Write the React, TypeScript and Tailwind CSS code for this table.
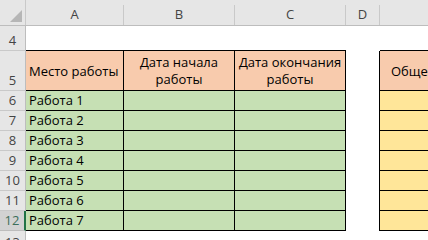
import React from "react";

const FONT = { fontFamily: '"Open Sans", "Noto Sans", sans-serif' };

const rows = [6, 7, 8, 9, 10, 11, 12];

function RowHead({ n, active = false, h }: { n: number; active?: boolean; h: string }) {
  return (
    <div
      className={`${h} w-[26px] shrink-0 flex items-end justify-center border-b text-[13px] leading-[17px] ${
        active
          ? "bg-[#d2d2d2] text-[#3b6e5a] border-r-2 border-r-[#217346] border-b-[#bdbdbd]"
          : "bg-[#e6e6e6] text-[#444] border-r border-r-[#bdbdbd] border-b-[#c9c9c9]"
      }`}
    >
      <span className="pb-[1px]">{n}</span>
    </div>
  );
}

export default function App() {
  return (
    <div className="w-[428px] h-[240px] overflow-hidden bg-white text-black" style={FONT}>
      {/* column letters */}
      <div className="flex items-end h-[26px] bg-[#e6e6e6] border-b border-[#bdbdbd] text-[13px] text-[#444]">
        <div className="w-[26px] h-full shrink-0 border-r border-[#c9c9c9] flex items-end justify-end pr-[3px] pb-[3px]">
          <svg width="12" height="12" viewBox="0 0 12 12">
            <polygon points="12,0 12,12 0,12" fill="#b6b6b6" />
          </svg>
        </div>
        <div className="w-[98px] h-[20px] shrink-0 border-r border-[#c9c9c9] flex items-center justify-center">A</div>
        <div className="w-[111px] h-[20px] shrink-0 border-r border-[#c9c9c9] flex items-center justify-center">B</div>
        <div className="w-[111px] h-[20px] shrink-0 border-r border-[#c9c9c9] flex items-center justify-center">C</div>
        <div className="w-[34px] h-[20px] shrink-0 border-r border-[#c9c9c9] flex items-center justify-center">D</div>
        <div className="flex-1 h-[20px]" />
      </div>

      {/* row 4 */}
      <div className="flex h-[25px]">
        <RowHead n={4} h="h-[25px]" />
        <div className="w-[98px] shrink-0 border-b border-black" />
        <div className="w-[111px] shrink-0 border-b border-black" />
        <div className="w-[111px] shrink-0 border-b border-black" />
        <div className="w-[34px] shrink-0" />
        <div className="flex-1 border-b border-black" />
      </div>

      {/* row 5: table headings */}
      <div className="flex h-[40px] text-[13px] leading-[17px]">
        <RowHead n={5} h="h-[40px]" />
        <div className="w-[98px] shrink-0 bg-[#f8cbad] border-r border-b border-black flex items-center pl-[3px] pt-[2px] whitespace-nowrap">
          Место работы
        </div>
        <div className="w-[111px] shrink-0 bg-[#f8cbad] border-r border-b border-black flex flex-col items-center justify-center text-center pt-[1px]">
          <span>Дата начала</span>
          <span>работы</span>
        </div>
        <div className="w-[111px] shrink-0 bg-[#f8cbad] border-r border-b border-black flex flex-col items-center justify-center text-center pt-[1px]">
          <span>Дата окончания</span>
          <span>работы</span>
        </div>
        <div className="w-[34px] shrink-0 border-r border-black" />
        <div className="flex-1 bg-[#f8cbad] border-b border-black flex items-center pl-[11px] pt-[2px] whitespace-nowrap">
          Общее время
        </div>
      </div>

      {/* rows 6–12: jobs */}
      {rows.map((n, i) => (
        <div key={n} className="flex h-[20px] text-[13px] leading-[17px]">
          <RowHead n={n} active={n === 12} h="h-[20px]" />
          <div className="w-[98px] shrink-0 bg-[#c6e0b4] border-r border-b border-black flex items-end pl-[3px] pb-[1px] whitespace-nowrap">
            Работа {i + 1}
          </div>
          <div className="w-[111px] shrink-0 bg-[#c6e0b4] border-r border-b border-black" />
          <div className="w-[111px] shrink-0 bg-[#c6e0b4] border-r border-b border-black" />
          <div className="w-[34px] shrink-0 border-r border-black" />
          <div className="flex-1 bg-[#ffe699] border-b border-black" />
        </div>
      ))}

      {/* row 13 */}
      <div className="flex h-[20px]">
        <div className="w-[26px] h-[20px] shrink-0 bg-[#e6e6e6] border-r border-[#bdbdbd] flex items-start justify-center text-[13px] leading-[17px] text-[#444] pt-[3px]">
          13
        </div>
        <div className="flex-1" />
      </div>
    </div>
  );
}
